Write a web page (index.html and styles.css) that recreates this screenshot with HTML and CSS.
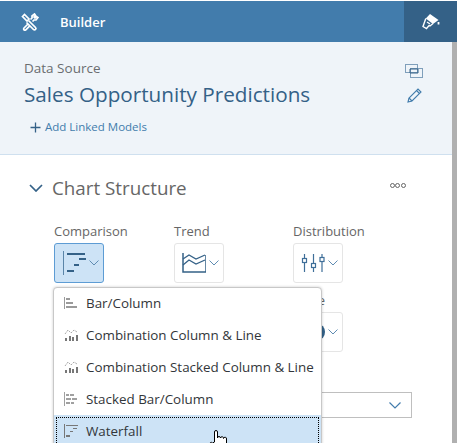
FILE: index.html
```html
<!DOCTYPE html>
<html lang="en">
<head>
    <meta charset="UTF-8">
    <title>Builder</title>
    <link rel="stylesheet" href="styles.css">
</head>
<body>
    <div class="app">
        <header class="topbar">
            <svg class="tools-icon" width="18" height="18" viewBox="0 0 18 18" fill="none" stroke="#fff" stroke-width="1.7">
                <path d="M1.5 3.5 L3.5 1.5 L8 6 L6 8 Z"/>
                <path d="M7.5 7.5 L14.5 14.5 a1.4 1.4 0 0 1 -2 2 L5.5 9.5"/>
                <path d="M9.5 6.5 L11 5 V3 L13.5 1 L14.5 2.5 L13 4 L14 5 L15.5 3.5 L17 4.5 L15 7 H13 L11.5 8.5"/>
                <path d="M7 11 L3 15 a1.2 1.2 0 0 0 1.8 1.8 L8.8 12.8"/>
            </svg>
            <span class="topbar-title">Builder</span>
            <div class="topbar-tab">
                <svg width="18" height="17" viewBox="0 0 18 17" fill="none" stroke="#fff" stroke-width="1.4">
                    <path d="M8 1 L16.5 7 L11 11 L3.8 5.5 Z" fill="#fff" stroke="none"/>
                    <path d="M3.8 5.5 L1 13.5 L4.5 15.5 L7 12.5 L8 13 L11 10.5"/>
                    <path d="M5 9 L8 11"/>
                    <path d="M16.5 9 v2.5" stroke-width="1.8"/>
                </svg>
            </div>
        </header>
        <div class="panel">
            <div class="content">
                <section class="source">
                    <div class="source-text">
                        <div class="source-label">Data Source</div>
                        <h1 class="source-name">Sales Opportunity Predictions</h1>
                        <div class="add-models">
                            <svg width="11" height="11" viewBox="0 0 11 11" stroke="#346187" stroke-width="1.3"><path d="M5.5 0.5 V10.5 M0.5 5.5 H10.5"/></svg>
                            <span>Add Linked Models</span>
                        </div>
                    </div>
                    <div class="source-actions">
                        <svg width="18" height="14" viewBox="0 0 18 14" fill="none">
                            <rect x="0.5" y="0.5" width="12" height="8" stroke="#7f9fbb"/>
                            <rect x="5.5" y="4.5" width="12" height="9" stroke="#7f9fbb"/>
                            <path d="M5 5 H13 V9 H5 Z" stroke="#346187"/>
                        </svg>
                        <svg width="15" height="15" viewBox="0 0 15 15" fill="none" stroke="#427cac" stroke-width="1.1">
                            <path d="M1 14 L2 10 L11 1 L14 4 L5 13 Z"/>
                            <path d="M2 10 L5 13 M9.5 2.5 L12.5 5.5"/>
                        </svg>
                    </div>
                </section>
                <section class="structure">
                    <div class="structure-head">
                        <svg width="14" height="8" viewBox="0 0 14 8" fill="none" stroke="#346187" stroke-width="1.7"><path d="M1 1 L7 7 L13 1"/></svg>
                        <h2 class="structure-title">Chart Structure</h2>
                        <div class="more-dots"><i></i><i></i><i></i></div>
                    </div>
                    <div class="type-grid">
                        <div class="type">
                            <div class="type-label">Comparison</div>
                            <div class="type-btn active">
                                <svg width="24" height="24" viewBox="0 0 24 24" fill="#346187">
                                    <rect x="1" y="0" width="1" height="24" fill="#5b85a8"/>
                                    <rect x="5" y="2" width="18" height="2"/>
                                    <rect x="17" y="7" width="7" height="2"/>
                                    <rect x="12" y="13" width="5" height="2"/>
                                    <rect x="5" y="19" width="7" height="2"/>
                                </svg>
                                <svg class="chev" width="10" height="6" viewBox="0 0 10 6"><path d="M0.5 0.5 L5 5 L9.5 0.5"/></svg>
                            </div>
                        </div>
                        <div class="type">
                            <div class="type-label">Trend</div>
                            <div class="type-btn">
                                <svg width="24" height="20" viewBox="0 0 24 20" fill="none" stroke="#346187" stroke-width="1.3">
                                    <path d="M1 0 V19 H24 V2" stroke-width="1.5"/>
                                    <path d="M1 6 L7 2 L14 6 L23 2"/>
                                    <path d="M1 12 L7 7 L14 11 L23 7"/>
                                </svg>
                                <svg class="chev" width="10" height="6" viewBox="0 0 10 6"><path d="M0.5 0.5 L5 5 L9.5 0.5"/></svg>
                            </div>
                        </div>
                        <div class="type">
                            <div class="type-label">Distribution</div>
                            <div class="type-btn">
                                <svg width="24" height="20" viewBox="0 0 24 20" fill="#fff" stroke="#3f6f99" stroke-width="1.2">
                                    <path d="M3.5 1 V19 M12.5 1 V19 M21 1 V19"/>
                                    <rect x="1.5" y="5.5" width="4" height="4"/>
                                    <rect x="10.5" y="10.5" width="4" height="4"/>
                                    <rect x="19" y="4.5" width="4" height="4"/>
                                </svg>
                                <svg class="chev" width="10" height="6" viewBox="0 0 10 6"><path d="M0.5 0.5 L5 5 L9.5 0.5"/></svg>
                            </div>
                        </div>
                        <div class="type"></div>
                        <div class="type"></div>
                        <div class="type row-two">
                            <div class="type-label">More</div>
                            <div class="type-btn">
                                <span class="blob"></span>
                                <svg class="chev" width="10" height="6" viewBox="0 0 10 6"><path d="M0.5 0.5 L5 5 L9.5 0.5"/></svg>
                            </div>
                        </div>
                    </div>
                    <div class="select-box">
                        <svg class="chev-big" width="12" height="7" viewBox="0 0 12 7"><path d="M0.5 0.5 L6 6 L11.5 0.5"/></svg>
                    </div>

                    <ul class="menu">
                        <li class="menu-item">
                            <svg width="14" height="14" viewBox="0 0 14 14" fill="#9a9a9a"><rect x="0" y="1" width="1" height="12"/><rect x="2" y="2" width="4" height="2"/><rect x="2" y="6" width="7" height="2"/><rect x="2" y="10" width="11" height="2"/></svg>
                            Bar/Column
                        </li>
                        <li class="menu-item">
                            <svg width="14" height="14" viewBox="0 0 14 14" fill="#777"><rect x="1" y="10" width="2" height="3"/><rect x="5" y="8" width="2" height="5"/><rect x="8" y="9" width="2" height="4"/><rect x="12" y="7" width="2" height="6"/><path d="M1 6 L4 2 L7 5 L10 2 L13 4" fill="none" stroke="#aaa" stroke-dasharray="2 1"/></svg>
                            Combination Column &amp; Line
                        </li>
                        <li class="menu-item">
                            <svg width="14" height="14" viewBox="0 0 14 14" fill="#777"><rect x="1" y="10" width="2" height="3"/><rect x="5" y="8" width="2" height="5"/><rect x="8" y="9" width="2" height="4"/><rect x="12" y="7" width="2" height="6"/><path d="M1 6 L4 2 L7 5 L10 2 L13 4" fill="none" stroke="#aaa" stroke-dasharray="2 1"/></svg>
                            Combination Stacked Column &amp; Line
                        </li>
                        <li class="menu-item">
                            <svg width="14" height="14" viewBox="0 0 14 14" fill="#a0a0a0"><rect x="0" y="0" width="1" height="14"/><rect x="2" y="2" width="3" height="2"/><rect x="6" y="2" width="4" height="2"/><rect x="2" y="6" width="5" height="2"/><rect x="8" y="6" width="5" height="2"/><rect x="2" y="10" width="4" height="2"/><rect x="7" y="10" width="3" height="2"/></svg>
                            Stacked Bar/Column
                        </li>
                        <li class="menu-item selected">
                            <svg width="14" height="14" viewBox="0 0 14 14" fill="#777"><rect x="0" y="0" width="1" height="14"/><rect x="2" y="1" width="12" height="1"/><rect x="9" y="4" width="4" height="1"/><rect x="6" y="7" width="3" height="1"/><rect x="2" y="11" width="4" height="2"/></svg>
                            Waterfall
                        </li>
                    </ul>
                    <svg class="cursor" width="20" height="22" viewBox="0 0 20 22" fill="#fff" stroke="#000" stroke-width="1">
                        <path d="M5.5 12 V2 a1.5 1.5 0 0 1 3 0 V8 a1.5 1.5 0 0 1 3 0 a1.5 1.5 0 0 1 3 .5 a1.5 1.5 0 0 1 3 .5 V16 L15 21 H6 L1 15 a1.5 1.5 0 0 1 2.5 -2 Z"/>
                    </svg>
                </section>
            </div>
            <div class="scrollbar"></div>
        </div>
    </div>
</body>
</html>
```

FILE: styles.css
```css
*{
    box-sizing: border-box;
}
html, body{
    margin: 0;
    height: 443px;
    overflow: hidden;
}
body{
    font-family: "Open Sans", "Noto Sans", sans-serif;
    background-color: #fff;
}
.app{
    display: flex;
    flex-direction: column;
    height: 443px;
}
.topbar{
    display: flex;
    align-items: center;
    height: 41px;
    margin-top: 1px;
    padding-left: 21px;
    background-color: #427cac;
    color: #fff;
    flex: none;
}
.topbar-title{
    margin-left: 21px;
    font-size: 13px;
    font-weight: 600;
}
.topbar-tab{
    display: flex;
    align-items: center;
    justify-content: center;
    margin-left: auto;
    width: 53px;
    height: 100%;
    background-color: #346187;
}
.panel{
    display: flex;
    flex: 1;
    min-height: 0;
}
.content{
    flex: 1;
    min-width: 0;
}
.scrollbar{
    width: 5px;
    background-color: #b0b0b0;
}
.source{
    display: flex;
    justify-content: space-between;
    height: 113px;
    padding: 17px 0 0 24px;
    background-color: #eff4f9;
    border-bottom: 1px solid #cfe0ef;
}
.source-label{
    font-size: 13.5px;
    line-height: 18px;
    color: #6a6d70;
}
.source-name{
    margin: 3px 0 0;
    font-size: 20.7px;
    line-height: 28px;
    font-weight: 400;
    color: #346187;
}
.add-models{
    display: flex;
    align-items: center;
    gap: 4px;
    margin: 11px 0 0 6px;
    font-size: 11.5px;
    line-height: 16px;
    color: #427cac;
}
.source-actions{
    display: flex;
    flex-direction: column;
    align-items: center;
    gap: 10px;
    padding: 5px 29px 0 0;
}
.structure{
    position: relative;
    padding: 21px 0 0 29px;
}
.structure-head{
    display: flex;
    align-items: center;
    height: 24px;
}
.structure-title{
    margin: 0 0 0 9px;
    font-size: 18.8px;
    font-weight: 400;
    color: #666;
}
.more-dots{
    display: flex;
    gap: 0.5px;
    margin: -6px 0 0 203px;
}
.more-dots i{
    width: 5px;
    height: 5px;
    border: 1px solid #666;
    border-radius: 50%;
}
.type-grid{
    display: grid;
    grid-template-columns: 120px 119px 110px;
    margin: 22px 0 0 25px;
}
.type-label{
    font-size: 13px;
    line-height: 18px;
    color: #666;
}
.row-two{
    margin-top: 8px;
}
.type-btn{
    display: flex;
    align-items: center;
    gap: 3px;
    width: 50px;
    height: 40px;
    margin-top: 3px;
    padding-left: 7px;
    background-color: #fff;
    border: 1px solid #e5e5e5;
    border-radius: 3px;
}
.type-btn.active{
    background-color: #cde3f6;
    border-color: #5d9cd4;
}
.chev{
    fill: none;
    stroke: #5f8cb2;
}
.blob{
    width: 14px;
    height: 16px;
    margin-left: 10px;
    background-color: #346187;
    border-radius: 50%;
}
.select-box{
    display: flex;
    align-items: center;
    justify-content: flex-end;
    width: 358px;
    height: 26px;
    margin: 40px 0 0 25px;
    padding-right: 10px;
    border: 1px solid #bfbfbf;
}
.chev-big{
    fill: none;
    stroke: #427cac;
    stroke-width: 1.2;
}
.menu{
    position: absolute;
    top: 132px;
    left: 53px;
    width: 269px;
    margin: 0;
    padding: 0;
    list-style: none;
    background-color: #fff;
    border: 1px solid #c8c8c8;
    border-radius: 4px 4px 0 0;
    box-shadow: 0 0 3px rgba(0, 0, 0, 0.2);
}
.menu-item{
    display: flex;
    align-items: center;
    gap: 8px;
    height: 32px;
    padding-left: 10px;
    font-size: 13.4px;
    color: #32363a;
}
.menu-item:first-child{
    height: 31px;
    padding-bottom: 1px;
}
.menu-item.selected{
    background-color: #cde3f6;
    outline: 1px dotted #000;
    outline-offset: -3px;
}
.cursor{
    position: absolute;
    top: 275px;
    left: 209px;
}
```
